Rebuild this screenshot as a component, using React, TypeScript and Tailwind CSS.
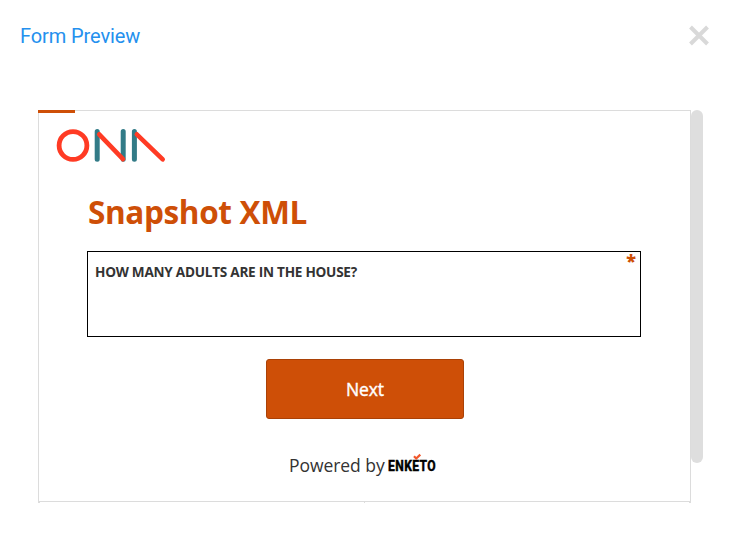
function OnaLogo() {
  return (
    <svg className="block h-[36px] w-[112px]" viewBox="0 0 112 36" fill="none" strokeWidth="5" strokeLinecap="round">
      <circle cx="17" cy="18.5" r="13.9" stroke="#ff3b24" strokeWidth="4.8" />
      <path d="M41.2 4.6V32.2M67.2 4.6V32.2M78.4 4.6V32.2" stroke="#327b87" />
      <path d="M43.2 7.3L67 32.2M80.8 7.3L106.7 32.4" stroke="#ff3b24" strokeWidth="4.6" />
    </svg>
  );
}

function EnketoLogo() {
  return (
    <svg className="block h-[24px] w-[60px] overflow-visible" viewBox="0 0 60 24">
      <text
        x="2"
        y="18.2"
        textLength="48"
        lengthAdjust="spacingAndGlyphs"
        className="font-[Roboto,sans-serif] text-[15px] font-bold tracking-[0.5px]"
        fill="#000"
        stroke="#000"
        strokeWidth="0.5"
      >
        ENKETO
      </text>
      <path d="M28 3.2L30.2 5.5L34.3 1.6" fill="none" stroke="#f1582c" strokeWidth="2.2" />
    </svg>
  );
}

export default function App() {
  return (
    <div className="h-[550px] w-[739px] overflow-hidden bg-white font-['Open_Sans',sans-serif]">
      <header className="flex h-[110px] items-start justify-between pt-[23px] pr-[29px] pl-5">
        <h1 className="font-[Roboto,sans-serif] text-[20px] leading-[26px] tracking-[-0.1px] text-[#2490ee]">Form Preview</h1>
        <button aria-label="Close" className="mt-[2px]">
          <svg className="block size-[22px]" viewBox="0 0 22 22" stroke="#d9d9d9" strokeWidth="4">
            <path d="M2.5 2L19.5 19M19.5 2L2.5 19" />
          </svg>
        </button>
      </header>
      <main className="flex pl-[38px]">
        <section className="h-[392px] w-[653px] border border-[#dcdcdc]">
          <div className="-mt-px -ml-px h-[3px] w-[37px] bg-[#ce4f07]" />
          <div className="mt-[14px] ml-[17px]">
            <OnaLogo />
          </div>
          <h2 className="mt-[27px] ml-[49px] h-[44px] text-[31.5px] leading-[44px] font-bold tracking-[-0.36px] whitespace-nowrap text-[#ce4f07]">
            Snapshot XML
          </h2>
          <div className="mt-[17px] ml-12 flex h-[86px] w-[554px] justify-between border border-black pr-1 pl-[7px]">
            <label className="pt-[10px] text-[13.6px] leading-[19px] font-bold tracking-[-0.26px] text-[#333]">
              HOW MANY ADULTS ARE IN THE HOUSE?
            </label>
            <span className="text-[18px] leading-[17px] font-extrabold text-[#ce4f07]">*</span>
          </div>
          <button className="mt-[22px] ml-[227px] flex h-[60px] w-[198px] items-center justify-center rounded-[3px] border border-[#aa4106] bg-[#ce4f07] text-[17.5px] tracking-[-0.1px] text-white [-webkit-text-stroke:0.4px_white]">
            Next
          </button>
          <footer className="mt-[34px] ml-[250px] flex items-start">
            <span className="w-[97px] text-[17.5px] leading-[25px] tracking-[-0.05px] whitespace-nowrap text-[#333]">
              Powered by
            </span>
            <EnketoLogo />
          </footer>
        </section>
        <div className="h-[353px] w-3 rounded-full bg-[#dedede]" />
      </main>
      <div className="flex h-px justify-between pr-[48px] pl-[38px]">
        <i className="w-[2px] bg-[#dcdcdc]" />
        <i className="w-px bg-[#dcdcdc]" />
        <i className="w-[2px] bg-[#dcdcdc]" />
      </div>
    </div>
  );
}
